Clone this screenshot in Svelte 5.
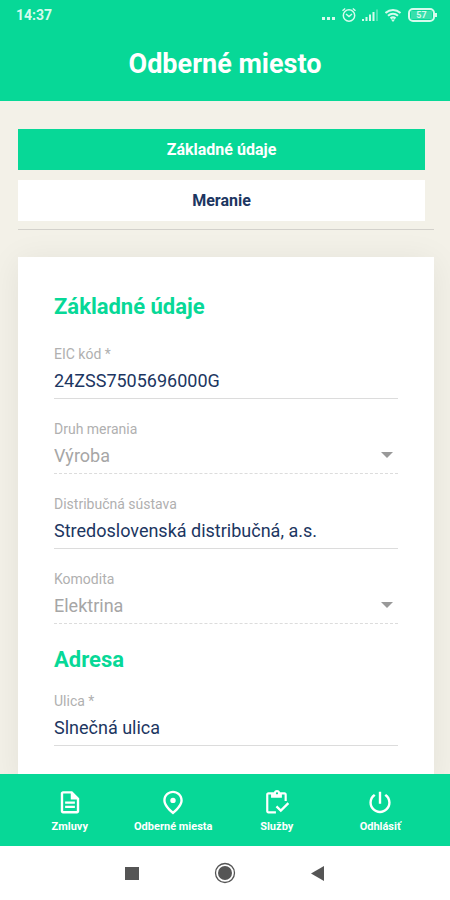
<script lang="ts">
	type Field = { id: string; label: string; value: string; type: 'text' | 'select' };

	const tabs = ['Základné údaje', 'Meranie'];
	let activeTab = $state('Základné údaje');

	const basicFields: Field[] = $state([
		{ id: 'eic', label: 'EIC kód *', value: '24ZSS7505696000G', type: 'text' },
		{ id: 'druh', label: 'Druh merania', value: 'Výroba', type: 'select' },
		{ id: 'sustava', label: 'Distribučná sústava', value: 'Stredoslovenská distribučná, a.s.', type: 'text' },
		{ id: 'komodita', label: 'Komodita', value: 'Elektrina', type: 'select' },
	]);

	const addressFields: Field[] = $state([
		{ id: 'ulica', label: 'Ulica *', value: 'Slnečná ulica', type: 'text' },
	]);

	const navItems = [
		{
			label: 'Zmluvy',
			icon: 'M7.500 15.500h9v2h-9zm0-4h9v2h-9zM14 2H5.500c-1.100 0-2 .9-2 2v16.500c0 1.100.9 2 2 2h13c1.100 0 2-.9 2-2V8.500L14 2zm4.300 18.300H5.700V4.200h7v5.500h5.600v10.600z',
		},
		{
			label: 'Odberné miesta',
			icon: 'M12 1.500C7.600 1.500 3 4.900 3 10.300c0 4 3 8.200 9 13.200 6-5 9-9.200 9-13.200 0-5.400-4.600-8.800-9-8.800zm0 2.200c3.400 0 6.800 2.600 6.800 6.700 0 2.900-2.200 6.200-6.800 10.200-4.600-4-6.800-7.300-6.800-10.200 0-4.100 3.400-6.700 6.800-6.700zm0 4.300a2.500 2.500 0 1 0 0 5 2.500 2.500 0 0 0 0-5z',
		},
		{
			label: 'Služby',
			icon: 'M4 5h2.500v3h10V5H19v6h2V5c0-1.100-.9-2-2-2h-4.180C14.400 1.840 13.300 1 12 1s-2.400.84-2.820 2H4c-1.100 0-2 .9-2 2v15.500c0 1.100.9 2 2 2h7v-2H4V5zm8-2c.55 0 1 .45 1 1s-.45 1-1 1-1-.45-1-1 .45-1 1-1zM21.750 12.250l-6.250 6.240-3.250-3.240-1.500 1.500L15.510 21.500l7.740-7.740z',
		},
		{
			label: 'Odhlásiť',
			icon: 'M13.100 2.500h-2.200v11h2.200v-11zm4.500 2.200l-1.500 1.500C18.100 7.500 19.600 9.700 19.600 12.500c0 4.200-3.400 7.600-7.600 7.600s-7.600-3.400-7.600-7.600c0-2.800 1.500-5 3.500-6.300L6.400 4.700C3.800 6.400 2.200 9.200 2.200 12.500c0 5.400 4.400 9.800 9.800 9.800s9.800-4.400 9.800-9.800c0-3.300-1.600-6.100-4.200-7.800z',
		},
	];
</script>

{#snippet fieldRow(field: Field)}
	<div class="field">
		<label for={field.id}>{field.label}</label>
		{#if field.type === 'select'}
			<div class="select-wrap">
				<select id={field.id} disabled>
					<option>{field.value}</option>
				</select>
				<svg class="arrow" viewBox="0 0 12 6" aria-hidden="true"><path d="M0 0h12L6 6z" /></svg>
			</div>
		{:else}
			<input id={field.id} type="text" bind:value={field.value} />
		{/if}
	</div>
{/snippet}

<div class="screen">
	<header>
		<div class="status">
			<span class="time">14:37</span>
			<div class="status-icons">
				<svg width="16" height="16" viewBox="0 0 16 16">
					<path d="M2 10h3v3H2zM7 10h3v3H7zM12 10h3v3h-3z" fill="currentColor" />
				</svg>
				<svg width="16" height="16" viewBox="0 0 16 16" fill="none" stroke="currentColor" stroke-width="1.500">
					<circle cx="8" cy="8.500" r="5.700" />
					<path d="M1.500 3.800 4.200 1.500M14.500 3.800 11.800 1.500M5 7l3 2.500L11 7" />
				</svg>
				<svg width="18" height="16" viewBox="0 0 18 16" fill="currentColor">
					<path d="M0 12h2v2H0zM3.500 10h2v4h-2zM7 7.500h2V14H7zM10.500 5h2v9h-2z" />
					<path d="M14 2.500h2V14h-2z" opacity="0.35" />
				</svg>
				<svg width="18" height="16" viewBox="0 0 18 16" fill="none" stroke="currentColor" stroke-width="2">
					<path d="M.5 6C5 2 11 2 15.500 6M3 8.800c3-2.600 7-2.600 10 0M5.500 11.400c1.600-1.300 3.400-1.300 5 0" />
					<path d="M6 12.500h4L8 15z" fill="currentColor" stroke="none" />
				</svg>
				<span class="battery"><span class="level">57</span></span>
			</div>
		</div>
		<h1>Odberné miesto</h1>
	</header>

	<main>
		<div class="tabs" role="tablist">
			{#each tabs as tab}
				<button
					role="tab"
					class:active={activeTab === tab}
					aria-selected={activeTab === tab}
					onclick={() => (activeTab = tab)}
				>
					{tab}
				</button>
			{/each}
		</div>

		<form class="card">
			<h2>Základné údaje</h2>
			<div class="fields">
				{#each basicFields as field}
					{@render fieldRow(field)}
				{/each}
			</div>
			<h2 class="next">Adresa</h2>
			<div class="fields">
				{#each addressFields as field}
					{@render fieldRow(field)}
				{/each}
			</div>
		</form>
	</main>

	<nav class="bottom-nav">
		{#each navItems as item}
			<a href="#{item.label}">
				<svg width="26" height="26" viewBox="0 0 24 24" fill="currentColor" aria-hidden="true">
					<path d={item.icon} />
				</svg>
				<span>{item.label}</span>
			</a>
		{/each}
	</nav>

	<div class="system-bar">
		<button aria-label="Prehľad">
			<svg width="24" height="24" viewBox="0 0 24 24"><path d="M5 6h14v13H5z" fill="#555" /></svg>
		</button>
		<button aria-label="Domov">
			<svg width="24" height="24" viewBox="0 0 24 24">
				<circle cx="12" cy="12" r="9.500" fill="none" stroke="#555" stroke-width="1.300" />
				<circle cx="12" cy="12" r="7" fill="#555" />
			</svg>
		</button>
		<button aria-label="Späť">
			<svg width="24" height="24" viewBox="0 0 24 24"><path d="M18 5v15L5 12.500z" fill="#555" /></svg>
		</button>
	</div>
</div>

<style>
	.screen {
		--green: #07d897;
		--navy: #1c3661;
		--grey: #a6a6a6;
		display: flex;
		flex-direction: column;
		height: 100vh;
		background: #f3f1e8;
		font-family: Roboto, 'Liberation Sans', sans-serif;
	}
	header {
		flex: none;
		background: var(--green);
		color: #fff;
		padding-bottom: 13px;
	}
	.status {
		display: flex;
		justify-content: space-between;
		align-items: center;
		height: 30px;
		padding: 0 15px 0 16px;
		color: #d5fbed;
	}
	.time {
		font-size: 14px;
		font-weight: 700;
	}
	.status-icons {
		display: flex;
		align-items: center;
		gap: 5px;
	}
	.status-icons svg {
		display: block;
	}
	.battery {
		position: relative;
		display: flex;
		box-sizing: border-box;
		width: 27px;
		height: 14px;
		padding: 1px;
		border: 2px solid currentColor;
		border-radius: 5px;
	}
	.battery::after {
		content: '';
		position: absolute;
		right: -4px;
		top: 3px;
		width: 2px;
		height: 4px;
		background: currentColor;
	}
	.level {
		flex: 1;
		font-size: 9px;
		font-weight: 700;
		line-height: 8px;
		text-align: center;
		background: rgba(255, 255, 255, 0.2);
	}
	h1 {
		margin: 10px 0 0;
		font-size: 27px;
		font-weight: 700;
		line-height: 48px;
		text-align: center;
	}
	main {
		flex: 1;
		min-height: 0;
		overflow: hidden;
		padding: 28px 16px 0 18px;
	}
	.tabs {
		display: flex;
		flex-direction: column;
		gap: 10px;
		padding: 0 9px 8px 0;
		border-bottom: 1px solid #d3d1cb;
	}
	.tabs button {
		height: 41px;
		padding: 0;
		border: 0;
		background: #fff;
		color: var(--navy);
		font: 700 16px Roboto, sans-serif;
	}
	.tabs button.active {
		background: var(--green);
		color: #fff;
	}
	.card {
		margin-top: 27px;
		padding: 36px;
		background: #fff;
		box-shadow: 0 4px 32px rgba(0, 0, 0, 0.07);
	}
	h2 {
		margin: 0 0 25px;
		color: var(--green);
		font-size: 22px;
		font-weight: 700;
		line-height: 28px;
	}
	h2.next {
		margin: 22px 0 19px;
	}
	.fields {
		display: flex;
		flex-direction: column;
		gap: 22px;
	}
	.field {
		display: flex;
		flex-direction: column;
	}
	label {
		color: #b0b0b0;
		font-size: 14px;
		line-height: 16px;
	}
	input,
	select {
		box-sizing: border-box;
		width: 100%;
		height: 37px;
		margin: 0;
		padding: 0;
		border: 0;
		border-bottom: 1px solid #dcdcdc;
		border-radius: 0;
		outline: 0;
		background: transparent;
		color: var(--navy);
		font: 400 18px Roboto, sans-serif;
	}
	select {
		appearance: none;
		border-bottom: 1px dashed #dcdcdc;
		color: var(--grey);
		opacity: 1;
	}
	.select-wrap {
		position: relative;
		display: flex;
	}
	.arrow {
		position: absolute;
		right: 5px;
		top: 15px;
		width: 12px;
		height: 6px;
		fill: #999;
		pointer-events: none;
	}
	.bottom-nav {
		flex: none;
		display: flex;
		box-sizing: border-box;
		padding: 4px 18px 0;
		height: 72px;
		background: var(--green);
	}
	.bottom-nav a {
		flex: 1;
		display: flex;
		flex-direction: column;
		align-items: center;
		justify-content: center;
		gap: 4px;
		color: #fff;
		font-size: 11px;
		font-weight: 700;
		line-height: 16px;
		text-decoration: none;
	}
	.bottom-nav svg {
		display: block;
	}
	.system-bar {
		flex: none;
		display: flex;
		justify-content: center;
		align-items: center;
		gap: 69px;
		height: 54px;
		background: #fff;
	}
	.system-bar button {
		display: flex;
		padding: 0;
		border: 0;
		background: none;
	}
</style>
